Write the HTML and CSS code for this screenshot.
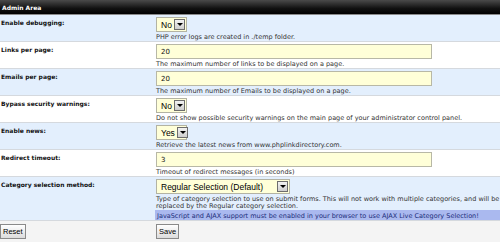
FILE: index.html
```html
<!DOCTYPE html>
<html lang="en">
<head>
  <meta charset="UTF-8">
  <title>Admin Area</title>
  <link rel="stylesheet" href="styles.css">
</head>
<body>
  <div class="admin">
    <div class="admin__title">Admin Area</div>

    <div class="row row--alt">
      <div class="row__label">Enable debugging:</div>
      <div class="row__field">
        <div class="select"><span class="select__text">No</span><span class="select__arrow"></span></div>
        <div class="row__help">PHP error logs are created in ./temp folder.</div>
      </div>
    </div>

    <div class="row">
      <div class="row__label">Links per page:</div>
      <div class="row__field">
        <input class="field" type="text" value="20">
        <div class="row__help">The maximum number of links to be displayed on a page.</div>
      </div>
    </div>

    <div class="row row--alt">
      <div class="row__label">Emails per page:</div>
      <div class="row__field">
        <input class="field" type="text" value="20">
        <div class="row__help">The maximum number of Emails to be displayed on a page.</div>
      </div>
    </div>

    <div class="row">
      <div class="row__label">Bypass security warnings:</div>
      <div class="row__field">
        <div class="select"><span class="select__text">No</span><span class="select__arrow"></span></div>
        <div class="row__help">Do not show possible security warnings on the main page of your administrator control panel.</div>
      </div>
    </div>

    <div class="row row--alt">
      <div class="row__label">Enable news:</div>
      <div class="row__field">
        <div class="select"><span class="select__text">Yes</span><span class="select__arrow"></span></div>
        <div class="row__help">Retrieve the latest news from www.phplinkdirectory.com.</div>
      </div>
    </div>

    <div class="row">
      <div class="row__label">Redirect timeout:</div>
      <div class="row__field">
        <input class="field" type="text" value="3">
        <div class="row__help">Timeout of redirect messages (in seconds)</div>
      </div>
    </div>

    <div class="row row--alt">
      <div class="row__label">Category selection method:</div>
      <div class="row__field">
        <div class="select select--wide"><span class="select__text">Regular Selection (Default)</span><span class="select__arrow"></span></div>
        <div class="row__help">Type of category selection to use on submit forms. This will not work with multiple categories, and will be replaced by the Regular category selection.</div>
        <div class="row__notice">JavaScript and AJAX support must be enabled in your browser to use AJAX Live Category Selection!</div>
      </div>
    </div>

    <div class="row row--buttons">
      <div class="row__label"><button class="btn">Reset</button></div>
      <div class="row__field"><button class="btn">Save</button></div>
    </div>
  </div>
</body>
</html>
```

FILE: styles.css
```css
html {
  box-sizing: border-box;
  background: #fff;
}

*, *:before, *:after {
  box-sizing: inherit;
}

body {
  margin: 0;
  font-family: 'DejaVu Sans', Verdana, sans-serif;
  font-size: 6px;
  color: #222;
}

.admin__title {
  height: 15px;
  padding: 4px 2px 0;
  font-weight: bold;
  color: #fff;
  background: linear-gradient(to bottom, #4a4a4a 0%, #111 60%, #000 100%);
  border-bottom: 1px solid #8a8a8a;
}

.row {
  display: grid;
  grid-template-columns: 155px 1fr;
  padding-top: 2px;
  background: #fff;
  border-bottom: 1px solid #d5d9de;
}

.row--alt {
  background: #e3effd;
}

.row__label {
  padding: 2px 0 0 1px;
  font-weight: bold;
  color: #111;
}

.row__field {
  display: flex;
  flex-direction: column;
  align-items: flex-start;
  padding-left: 1px;
}

.row__help {
  padding-top: 2px;
  font-size: 6.5px;
  line-height: 7px;
  color: #333;
}

.row__notice {
  align-self: stretch;
  margin-left: -1px;
  height: 10px;
  padding: 2px 0 0 2px;
  font-size: 6.5px;
  background: #aab9ef;
  color: #1b2d7a;
}

.field {
  width: 276px;
  height: 15px;
  margin: 0;
  padding: 1px 4px 0;
  border: 1px solid #b8b8a6;
  background: #ffffd8;
  font-family: 'DejaVu Sans', Verdana, sans-serif;
  font-size: 7px;
  color: #111;
  outline: 0;
}

.select {
  display: flex;
  align-items: center;
  justify-content: space-between;
  width: 31px;
  height: 15px;
  padding: 0 1px 0 4px;
  border: 1px solid #b3b3a3;
  background: #ffffd8;
  font-family: 'Liberation Sans', Arial, sans-serif;
  font-size: 8.5px;
  color: #000;
}

.select--wide {
  width: 134px;
}

.select__text {
  padding-right: 2px;
}

.select__arrow {
  position: relative;
  flex: none;
  width: 11px;
  height: 11px;
  border: 1px solid #6d6d6d;
  background: linear-gradient(to bottom, #f2f2f2, #cfcfcf);
}

.select__arrow:after {
  content: '';
  position: absolute;
  left: 2px;
  top: 3px;
  border-left: 3px solid transparent;
  border-right: 3px solid transparent;
  border-top: 3px solid #000;
}

.row--buttons {
  padding: 3px 0 6px;
  background: #f4f4f4;
  border-bottom: 0;
}

.row--buttons .row__label {
  padding: 0;
}

.btn {
  height: 15px;
  margin: 0;
  padding: 0 2px;
  border: 1px solid #8a8a8a;
  background: linear-gradient(to bottom, #ffffff, #dcdcdc);
  font-family: 'Liberation Sans', Arial, sans-serif;
  font-size: 7.5px;
  color: #000;
  cursor: pointer;
}
```
